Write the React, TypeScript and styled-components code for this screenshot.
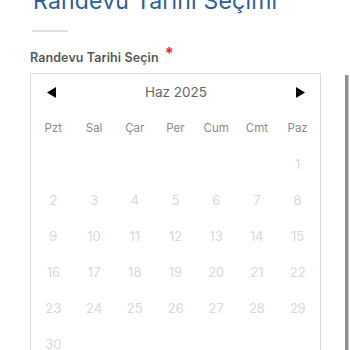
import React from "react";
import styled, { createGlobalStyle } from "styled-components";

const GlobalStyle = createGlobalStyle`
  html, body {
    margin: 0;
    padding: 0;
    background: #ffffff;
    overflow: hidden;
  }
  body {
    font-family: "Inter", "Noto Sans", sans-serif;
  }
`;

const weekDays = ["Pzt", "Sal", "Çar", "Per", "Cum", "Cmt", "Paz"];

// June 2025 starts on a Sunday (last column)
const days: (number | null)[] = [
  ...Array(6).fill(null),
  ...Array.from({ length: 30 }, (_, i) => i + 1),
];

export default function App() {
  return (
    <>
      <GlobalStyle />
      <Page>
        <Title>Randevu Tarihi Seçimi</Title>
        <Divider />
        <Content>
          <Form>
            <Label>
              Randevu Tarihi Seçin<Required>*</Required>
            </Label>
            <Calendar>
              <CalendarHeader>
                <NavButton aria-label="Önceki ay">
                  <svg width="9" height="11" viewBox="0 0 9 11">
                    <polygon points="9,0 9,11 0,5.5" fill="#000" />
                  </svg>
                </NavButton>
                <MonthLabel>Haz 2025</MonthLabel>
                <NavButton aria-label="Sonraki ay">
                  <svg width="9" height="11" viewBox="0 0 9 11">
                    <polygon points="0,0 0,11 9,5.5" fill="#000" />
                  </svg>
                </NavButton>
              </CalendarHeader>
              <Grid>
                {weekDays.map((d) => (
                  <WeekDay key={d}>{d}</WeekDay>
                ))}
                {days.map((d, i) => (
                  <Day key={i}>{d ?? ""}</Day>
                ))}
              </Grid>
            </Calendar>
          </Form>
          <SideBar />
        </Content>
      </Page>
    </>
  );
}

const Page = styled.div`
  width: 350px;
  height: 350px;
  overflow: hidden;
  display: flex;
  flex-direction: column;
`;

const Title = styled.h1`
  margin: -17px 0 0 33px;
  font-family: "Inter", "Noto Sans", sans-serif;
  font-size: 23px;
  line-height: 36px;
  font-weight: 400;
  color: #2f5d9c;
  white-space: nowrap;
  letter-spacing: 0.2px;
`;

const Divider = styled.hr`
  flex-shrink: 0;
  width: 36px;
  height: 0;
  border: none;
  border-top: 2px solid #dedede;
  margin: 11px 0 0 32px;
`;

const Content = styled.div`
  display: flex;
  align-items: flex-start;
  padding-left: 30px;
  margin-top: 16px;
`;

const Form = styled.div`
  display: flex;
  flex-direction: column;
  width: 291px;
`;

const Label = styled.label`
  font-size: 12.5px;
  line-height: 16px;
  font-weight: 600;
  color: #585858;
  letter-spacing: 0.1px;
`;

const Required = styled.span`
  color: #e0282e;
  font-size: 16px;
  font-weight: 700;
  position: relative;
  top: -3px;
  margin-left: 6px;
`;

const Calendar = styled.div`
  margin-top: 7px;
  border: 1px solid #d9d9d9;
  border-bottom: none;
  height: 400px;
  padding: 0 2px;
`;

const CalendarHeader = styled.div`
  display: flex;
  align-items: center;
  justify-content: space-between;
  height: 36px;
  padding: 0 13px 0 14px;
`;

const NavButton = styled.button`
  border: none;
  background: none;
  padding: 0;
  display: flex;
  align-items: center;
  cursor: pointer;
`;

const MonthLabel = styled.span`
  font-size: 13.5px;
  color: #666666;
  font-weight: 400;
`;

const Grid = styled.div`
  display: grid;
  grid-template-columns: repeat(7, 1fr);
  grid-auto-rows: 36px;
`;

const WeekDay = styled.div`
  display: flex;
  align-items: center;
  justify-content: center;
  font-size: 11.5px;
  color: #8a8a8a;
`;

const Day = styled.div`
  display: flex;
  align-items: center;
  justify-content: center;
  font-size: 13px;
  color: #d8d8d8;
`;

const SideBar = styled.div`
  width: 3px;
  height: 300px;
  margin-left: 24px;
  margin-top: 27px;
  background: #8f8f8f;
  border-right: 1px solid #c8c8c8;
`;
